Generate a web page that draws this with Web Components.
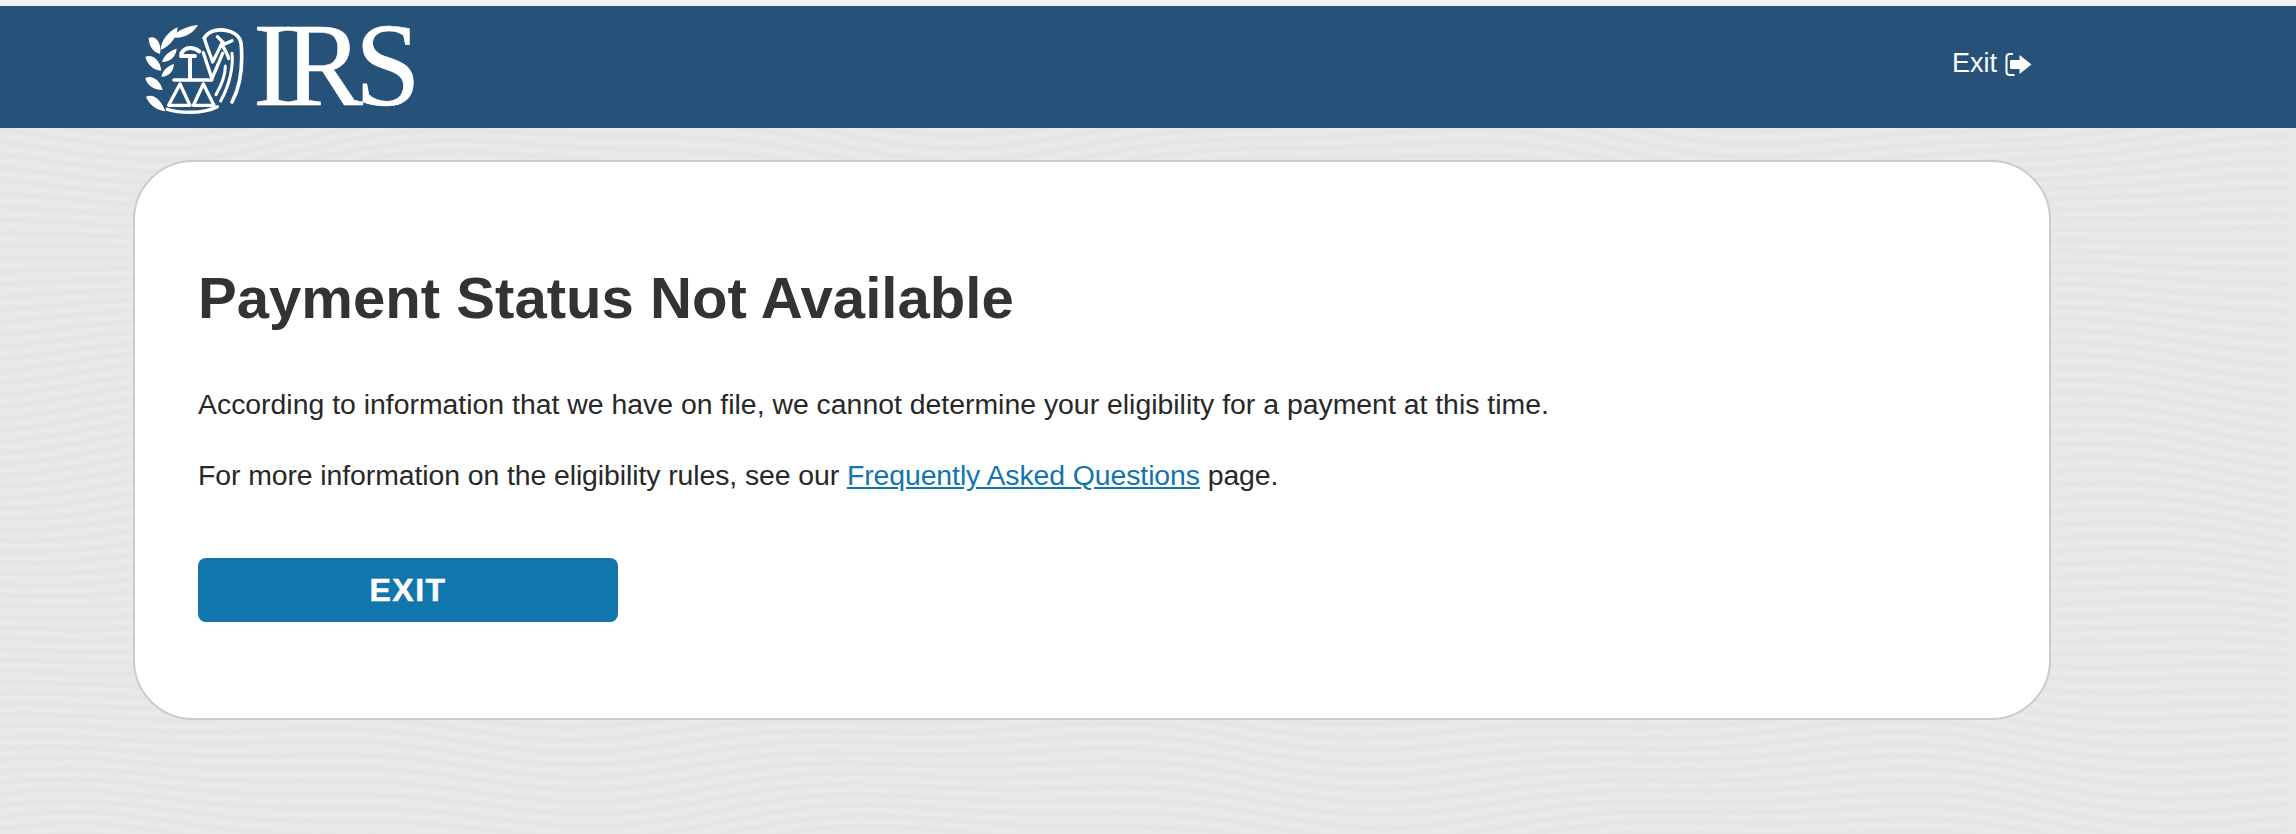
<!DOCTYPE html>
<html lang="en">
<head>
<meta charset="utf-8">
<title>Payment Status Not Available</title>
<style>
  html, body { margin: 0; height: 834px; overflow: hidden; }
  body { background: #e9e9e9; font-family: "Liberation Sans", Arial, sans-serif; color: #333; }
  status-card a { color: #1175ae; }
</style>
</head>
<body>
<wave-backdrop></wave-backdrop>
<irs-header>
  <irs-logo slot="logo"></irs-logo>
  <exit-link slot="exit">Exit</exit-link>
</irs-header>
<status-card heading="Payment Status Not Available">
  <p>According to information that we have on file, we cannot determine your eligibility for a payment at this time.</p>
  <p>For more information on the eligibility rules, see our <a href="#faq">Frequently Asked Questions</a> page.</p>
  <irs-button slot="actions">EXIT</irs-button>
</status-card>

<script>
// grey wavy lines behind everything
class WaveBackdrop extends HTMLElement {
  constructor() {
    super();
    this.root = this.attachShadow({ mode: "open" });
    let paths = "";
    for (let y0 = 100; y0 < 860; y0 += 12) {
      let d = "";
      for (let x = 0; x <= 2296; x += 16) {
        const amp = 14 + 6 * Math.sin(y0 / 130);
        const y = y0 + amp * Math.sin(x / 135 + y0 / 210) + 6 * Math.sin(x / 61 - y0 / 95);
        d += (x === 0 ? "M" : "L") + x + " " + y.toFixed(1);
      }
      paths += `<path d="${d}"/>`;
    }
    this.root.innerHTML = `
      <style>
        :host { position: absolute; left: 0; top: 0; width: 2296px; height: 834px; z-index: -1; overflow: hidden; }
        svg { display: block; filter: blur(1px); }
        path { fill: none; stroke: #e4e4e4; stroke-width: 4; }
      </style>
      <svg width="2296" height="834">${paths}</svg>
    `;
  }
}

const headerTemplate = document.createElement("template");
headerTemplate.innerHTML = `
  <style>
    :host {
      display: flex;
      align-items: center;
      justify-content: space-between;
      box-sizing: border-box;
      height: 128px;
      border-top: 6px solid #f0f0f0;
      padding: 0 264px 0 140px;
      background: #265178;
      color: #fff;
    }
  </style>
  <slot name="logo"></slot>
  <slot name="exit"></slot>
`;

class IrsHeader extends HTMLElement {
  constructor() {
    super();
    this.root = this.attachShadow({ mode: "open" });
    this.root.appendChild(headerTemplate.content.cloneNode(true));
  }
}

const logoTemplate = document.createElement("template");
logoTemplate.innerHTML = `
  <style>
    :host { display: flex; align-items: center; height: 100px; margin-top: -2px; }
    svg { display: block; width: 115px; height: 100px; flex: none; filter: blur(0.7px); }
    span {
      margin-left: -2px;
      font: 118px/100px "Liberation Serif", "Times New Roman", serif;
      letter-spacing: -8px;
      color: #fff;
      -webkit-text-stroke: 0.6px #fff;
      filter: blur(0.4px);
    }
  </style>
  <svg viewBox="0 0 345 300" aria-hidden="true">
    <g fill="#fff">
      <path d="M95 64C112 42 145 30 174 27C160 52 130 70 95 64Z"/>
      <path d="M62 102C62 76 84 46 113 34C112 62 90 92 62 102Z"/>
      <path d="M26 66C46 56 66 80 60 114C38 108 26 88 26 66Z"/>
      <path d="M66 138C72 116 90 104 110 98C108 120 92 138 66 138Z"/>
      <path d="M16 122C38 114 60 132 64 164C40 162 22 146 16 122Z"/>
      <path d="M64 182C70 160 84 150 102 144C100 166 88 182 64 182Z"/>
      <path d="M16 186C36 176 60 192 68 222C42 222 22 210 16 186Z"/>
      <path d="M18 242C40 232 64 252 76 286C50 282 28 268 18 242Z"/>
    </g>
    <g fill="none" stroke="#fff" stroke-linecap="round" stroke-linejoin="round">
      <path stroke-width="11" d="M193 66C206 44 236 38 262 44C288 50 304 66 304 92C308 150 302 210 276 258"/>
      <path stroke-width="10" d="M193 66C200 92 212 120 218 138C226 122 236 104 244 84C252 96 262 112 266 128"/>
      <path stroke-width="10" d="M232 62L254 84L276 74"/>
      <path stroke-width="10" d="M190 110L216 188L248 112"/>
      <path stroke-width="9" d="M276 112C280 150 270 205 242 255"/>
      <path stroke-width="9" d="M256 150C256 175 246 205 228 236"/>
      <path stroke-width="12" d="M123 120H165M124 112C136 92 160 92 178 106M150 122V190"/>
      <path stroke-width="11" d="M102 192H215"/>
      <path stroke-width="10" d="M120 204L86 268H150ZM190 204L160 268H222Z"/>
      <path stroke-width="10" d="M82 280C120 292 190 294 232 272"/>
    </g>
  </svg>
  <span>IRS</span>
`;

class IrsLogo extends HTMLElement {
  constructor() {
    super();
    this.root = this.attachShadow({ mode: "open" });
    this.root.appendChild(logoTemplate.content.cloneNode(true));
  }
}

const exitTemplate = document.createElement("template");
exitTemplate.innerHTML = `
  <style>
    :host { display: inline-flex; align-items: center; gap: 8px; font-size: 27px; color: #fff; margin-top: -8px; }
    svg { display: block; width: 27px; height: 25px; margin-top: 2px; }
  </style>
  <slot></slot>
  <svg viewBox="0 0 27 25" aria-hidden="true">
    <path d="M8 2H5C2.5 2 1.5 3 1.5 5V20C1.5 22 2.5 23 5 23H9.5" fill="none" stroke="#fff" stroke-width="2"/>
    <path d="M6.5 8H14.5V3L26.5 12.5L14.5 22V17H6.5C5.5 17 5 16.5 5 15.5V9.5C5 8.5 5.5 8 6.5 8Z" fill="#fff"/>
  </svg>
`;

class ExitLink extends HTMLElement {
  constructor() {
    super();
    this.root = this.attachShadow({ mode: "open" });
    this.root.appendChild(exitTemplate.content.cloneNode(true));
  }
}

const cardTemplate = document.createElement("template");
cardTemplate.innerHTML = `
  <style>
    :host {
      display: block;
      box-sizing: border-box;
      width: 1918px;
      height: 560px;
      margin: 32px 0 0 133px;
      padding: 105px 63px 0;
      border: 2px solid #ccc;
      border-radius: 60px;
      background: #fff;
    }
    h1 { margin: 0 0 58px; font-size: 58.1px; line-height: 62px; font-weight: 700; color: #333; }
    ::slotted(p) { margin: 0 0 36px; font-size: 28.4px; line-height: 35px; color: #282828; }
    ::slotted(p:nth-of-type(2)) { letter-spacing: -0.08px; }
    .actions { margin-top: 65px; }
  </style>
  <h1></h1>
  <slot></slot>
  <div class="actions"><slot name="actions"></slot></div>
`;

class StatusCard extends HTMLElement {
  constructor() {
    super();
    this.root = this.attachShadow({ mode: "open" });
    this.root.appendChild(cardTemplate.content.cloneNode(true));
    this.root.querySelector("h1").textContent = this.getAttribute("heading");
  }
}

const buttonTemplate = document.createElement("template");
buttonTemplate.innerHTML = `
  <style>
    :host {
      display: flex;
      align-items: center;
      justify-content: center;
      width: 420px;
      height: 64px;
      border-radius: 8px;
      background: #1175ae;
      color: #fff;
      font-size: 32px;
      font-weight: 700;
      letter-spacing: 1.5px;
      -webkit-text-stroke: 0.5px #fff;
    }
  </style>
  <slot></slot>
`;

class IrsButton extends HTMLElement {
  constructor() {
    super();
    this.root = this.attachShadow({ mode: "open" });
    this.root.appendChild(buttonTemplate.content.cloneNode(true));
  }
}

customElements.define("wave-backdrop", WaveBackdrop);
customElements.define("irs-header", IrsHeader);
customElements.define("irs-logo", IrsLogo);
customElements.define("exit-link", ExitLink);
customElements.define("status-card", StatusCard);
customElements.define("irs-button", IrsButton);
</script>
</body>
</html>
